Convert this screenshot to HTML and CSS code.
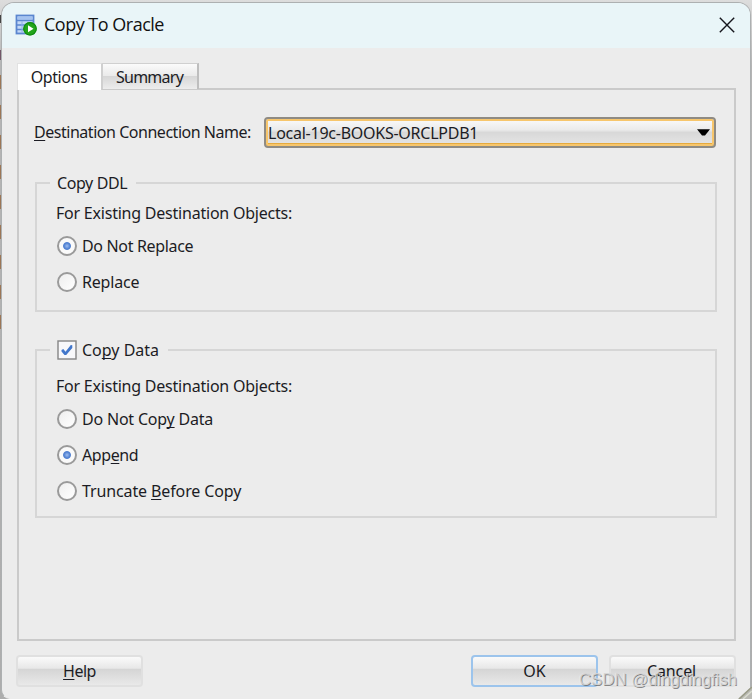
FILE: index.html
```html
<!DOCTYPE html>
<html lang="en">
<head>
<meta charset="utf-8">
<title>Copy To Oracle</title>
<link rel="stylesheet" href="styles.css">
</head>
<body>
<div class="edge"><i class="m1"></i><i class="m2"></i><i></i><i></i><i></i><i></i><i></i><i></i><i></i><i></i><i></i></div>
<main class="window">
  <header class="titlebar">
    <svg class="app-icon" width="22" height="22" viewBox="0 0 22 22">
      <rect x="1.5" y="1.5" width="17" height="18" fill="#c3d8f7" stroke="#5b86cf" stroke-width="1.8"/>
      <rect x="2.5" y="2.5" width="15" height="3" fill="#a5c3f0"/>
      <path d="M1.5 6.5H18M1.5 11H18M1.5 15.5H18" stroke="#5b86cf" stroke-width="1.6"/>
      <path d="M7 7V19" stroke="#8fb0e6" stroke-width="1"/>
      <circle cx="15" cy="14.8" r="6.8" fill="#22a51b"/>
      <circle cx="15" cy="14.8" r="6.2" fill="none" stroke="#118b10" stroke-width="1.1"/>
      <path d="M13 11.3V18.3L18.5 14.8Z" fill="#fff"/>
    </svg>
    <h1>Copy To Oracle</h1>
    <svg class="close" width="16" height="16" viewBox="0 0 16 16"><path d="M.8 .8L15.2 15.2M15.2 .8L.8 15.2" stroke="#15151c" stroke-width="1.4"/></svg>
  </header>
  <nav class="tabs"><span class="tab active"><b class="t-opt">Options</b></span><span class="tab"><b class="t-sum">Summary</b></span></nav>
  <section class="panel">
    <div class="connection">
      <label class="t-dest"><u>D</u>estination Connection Name:</label>
      <div class="combo"><span class="t-local">Local-19c-BOOKS-ORCLPDB1</span><svg width="13" height="7" viewBox="0 0 13 7"><path d="M0 .3H13L8 6.5H5Z" fill="#000"/></svg></div>
    </div>
    <div class="group ddl">
      <div class="legend"><span class="t-ddl">Copy DDL</span></div>
      <p class="t-exist">For Existing Destination Objects:</p>
      <div class="option"><i class="radio on"></i><span class="t-dnr">Do Not Replace</span></div>
      <div class="option"><i class="radio"></i><span class="t-rep">Replace</span></div>
    </div>
    <div class="group data">
      <div class="legend"><svg class="check" width="20" height="20" viewBox="0 0 20 20"><rect x="1" y="1" width="18" height="18" fill="#f8f8fa" stroke="#858585" stroke-width="1.4"/><path d="M4.5 10L6.3 9L8.5 11.7L13.8 5L15.3 5.2V8L9.2 15H7.5L4.5 11.6Z" fill="#4277cb"/></svg><span class="t-data">Co<u>p</u>y Data</span></div>
      <p class="t-exist">For Existing Destination Objects:</p>
      <div class="option"><i class="radio"></i><span class="t-dnc">Do Not Cop<u>y</u> Data</span></div>
      <div class="option"><i class="radio on"></i><span class="t-app">App<u>e</u>nd</span></div>
      <div class="option"><i class="radio"></i><span class="t-trunc">Truncate <u>B</u>efore Copy</span></div>
    </div>
  </section>
  <footer class="buttons">
    <div class="button"><span class="t-help"><u>H</u>elp</span></div>
    <div class="button ok"><span class="t-ok">OK</span></div>
    <div class="button"><span class="t-cancel">Cancel</span></div>
  </footer>
</main>
<div class="watermark">CSDN @dingdingfish</div>
<svg class="corner" width="14" height="13" viewBox="0 0 14 13"><path d="M14 0V13H0Z" fill="#b9b9b3"/><path d="M1 13L14 1" stroke="#999b87" stroke-width="1.5"/><path d="M5 13L14 5" stroke="#d9dbcf" stroke-width="1.5"/></svg>
</body>
</html>
```
FILE: styles.css
```css
* { box-sizing: border-box; }
body {
  margin: 0; width: 752px; height: 699px; overflow: hidden; position: relative;
  background: linear-gradient(#dddddd 0, #b5b5b5 65px, #adadad 100%);
  font: 16px/22px "Noto Sans", sans-serif; color: #1c1c24; white-space: nowrap;
}
.edge { position: absolute; left: 0; top: 15px; width: 3px; }
.edge i { display: block; height: 14px; margin-bottom: 16px; background: #9b7656; }
.edge .m1 { background: #444; height: 8px; margin-bottom: 27px; }
.edge .m2 { height: 10px; background: #735768; margin-bottom: 15px; }
.window {
  position: relative; width: 750px; height: 697px; margin: 2px 0 0 1px; overflow: hidden;
  border: 1px solid #adb0b1; border-bottom-color: #ececec; border-radius: 13px 13px 9px 9px; background: #ececec;
}
.titlebar { height: 45px; padding: 0 14px 0 13px; display: flex; align-items: center; background: #e9f5f8; }
.app-icon { margin-top: -2px; }
h1 { margin: -3px auto 0 7px; font: 18px/24px "Open Sans", sans-serif; color: #111; letter-spacing: -.5px; }
.close { margin-top: -2px; margin-right: 1px; }
.tabs { display: flex; margin: 15px 0 0 15px; height: 27px; position: relative; z-index: 1; }
.tab {
  display: flex; align-items: center; justify-content: center; width: 97px; height: 26px;
  border: 1px solid #d0d0d0; border-right: 2px solid #bebebe; border-bottom: 0;
  background: linear-gradient(#fbfbfb, #eaeaea 48%, #d7d7d7 50%, #ededed);
}
.tab b { font-weight: normal; margin-right: 1px; }
.active { width: 85px; height: 27px; background: #fff; border-color: #e2e2e2; border-right: 1px solid #d0d0d0; }
.panel { width: 719px; height: 553px; margin: -2px 0 0 15px; padding: 27px 17px 0 16px; border: 2px solid #cacaca; }
.connection { display: flex; align-items: center; height: 31px; }
.connection label { width: 230px; margin-top: -1px; margin-left: -1px; flex: none; }
.combo {
  width: 452px; flex: none; height: 31px; border: 2px solid #8f8b83; border-radius: 4px; padding: 0 3px 0 2px;
  display: flex; align-items: center; justify-content: space-between;
  background: linear-gradient(#fafafa, #ebebeb 40%, #d8d8d8 50%, #e6e6e6);
  box-shadow: inset 0 0 0 2px #f7c66c, inset 0 -3px #e6aa3e;
}
.combo svg { margin-right: 1px; }
.combo span { margin-top: 1px; }
.group { width: 682px; border: 2px solid #d6d6d6; padding: 0 0 0 20px; }
.ddl { height: 130px; margin-top: 34px; }
.data { height: 169px; margin-top: 37px; }
.legend { height: 22px; margin-top: -12px; margin-left: -7px; padding: 0 9px 0 7px; background: #ececec; width: max-content; display: flex; align-items: center; gap: 5px; }
.group p { margin: 8px 0 0 -1px; }
.data p { margin-top: 14px; }
.option { display: flex; align-items: center; gap: 5px; height: 22px; margin-top: 14px; }
.group p + .option { margin-top: 11px; }
.radio { width: 20px; height: 20px; border: 2px solid #9a9a9a; border-radius: 50%; background: linear-gradient(135deg, #eee, #fff); }
.on { background: radial-gradient(circle at 50% 50%, #9dbdf0 0, #4679ce 3.4px, #fafafa 4.4px); }
u { text-decoration-thickness: 1px; text-underline-offset: 2px; text-decoration-skip-ink: none; }
.t-opt { letter-spacing: -.4px; }
.t-sum { letter-spacing: -.75px; }
.t-dest { letter-spacing: -.47px; }
.t-local { letter-spacing: -.25px; }
.t-exist { letter-spacing: -.22px; }
.t-ddl { letter-spacing: -.4px; }
.t-dnr { letter-spacing: -.33px; }
.t-rep { letter-spacing: -.2px; }
.t-dnc { letter-spacing: -.2px; }
.t-app { letter-spacing: -.4px; }
.t-trunc { letter-spacing: -.12px; }
.t-help { letter-spacing: -.5px; }
.t-cancel { margin-right: 2px; letter-spacing: -.1px; }
.buttons { display: flex; margin: 14px 0 0 14px; }
.button {
  width: 127px; height: 32px; border: 2px solid #e0e0e0; border-radius: 4px;
  background: linear-gradient(#fafafa, #e8e8e8 40%, #d5d5d5 44%, #e9e9e9);
  display: flex; align-items: center; justify-content: center;
}
.ok { margin: 0 11px 0 328px; border-color: #9cc4ec; }
.watermark {
  position: absolute; left: 579px; top: 669px; font: 17px/22px "Liberation Sans", sans-serif; letter-spacing: -.15px;
  color: rgba(205,205,205,.75); text-shadow: -.5px -.5px rgba(255,255,255,.5), .7px .7px rgba(90,90,90,.7);
}
.corner { position: absolute; right: 0; bottom: 0; }
```
